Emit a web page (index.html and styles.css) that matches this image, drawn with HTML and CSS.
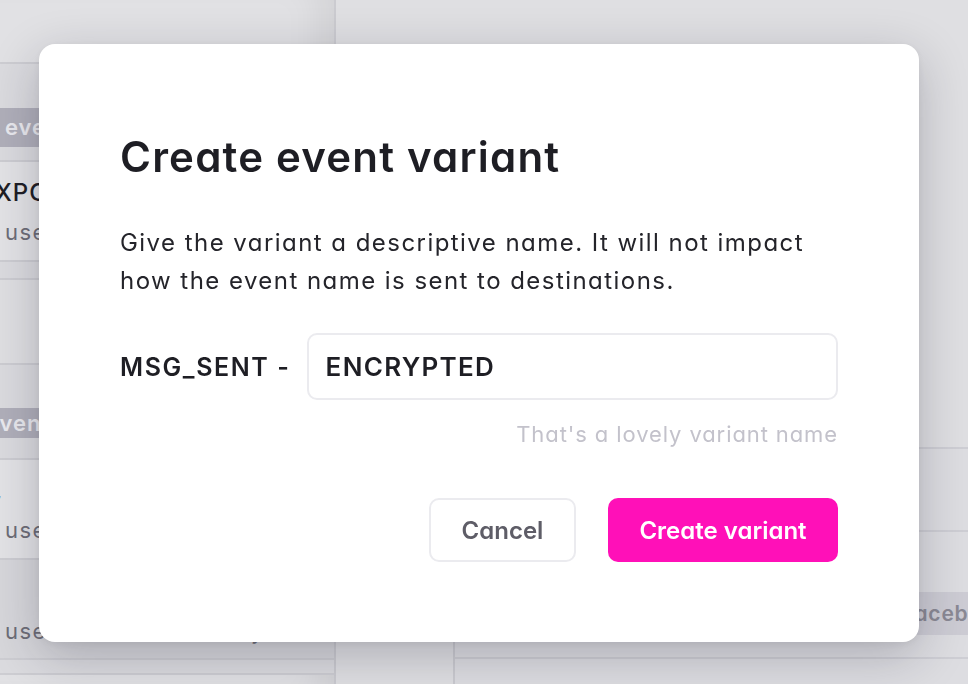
FILE: index.html
```html
<!DOCTYPE html>
<html lang="en">
<head>
<meta charset="utf-8">
<title>Create event variant</title>
<link rel="stylesheet" href="styles.css">
</head>
<body>
<div class="page">
  <aside class="side">
    <div class="side-head"></div>
    <div class="band band-45"></div>
    <div class="tag">events</div>
    <div class="band band-15"></div>
    <div class="item">
      <div class="item-name">XPORT</div>
      <div class="item-sub">user</div>
    </div>
    <div class="band band-18"></div>
    <div class="item item-empty"></div>
    <div class="band band-43"></div>
    <div class="tag tag-2">events</div>
    <div class="band band-22"></div>
    <div class="item">
      <div class="item-name">,</div>
      <div class="item-sub">user</div>
    </div>
    <div class="item item-last">
      <div class="item-sub">user. <span class="item-gap">y</span></div>
    </div>
    <div class="band band-15"></div>
  </aside>
  <main class="main">
    <div class="table">
      <div class="row row-1"></div>
      <div class="row row-2"></div>
      <div class="row row-badge"><span class="badge">facebook</span></div>
      <div class="row row-end"></div>
    </div>
  </main>
</div>

<div class="overlay"></div>

<div class="modal" role="dialog" aria-labelledby="modal-title">
  <h1 class="modal-title" id="modal-title">Create event variant</h1>
  <p class="modal-text">Give the variant a descriptive name. It will not impact how the event name is sent to destinations.</p>
  <div class="field-row">
    <span class="field-prefix">MSG_SENT -</span>
    <input class="field-input" type="text" value="ENCRYPTED">
  </div>
  <div class="field-hint">That's a lovely variant name</div>
  <div class="actions">
    <button class="btn btn-secondary" type="button">Cancel</button>
    <button class="btn btn-primary" type="button">Create variant</button>
  </div>
</div>
</body>
</html>
```

FILE: styles.css
```css
* { box-sizing: border-box; }

html, body {
  margin: 0;
  padding: 0;
  height: 100%;
  overflow: hidden;
}

body {
  font-family: "Inter", "Liberation Sans", sans-serif;
  font-feature-settings: "cv11";
  background: #e4e4e6;
  color: #1e1e24;
}

.page {
  display: flex;
  height: 684px;
}

/* ---------- background: side list ---------- */
.side {
  width: 336px;
  flex: none;
  display: flex;
  flex-direction: column;
  background: #e6e6e8;
  border-right: 2px solid #d0d0d4;
  box-shadow: inset -40px 0 40px -30px rgba(0, 0, 0, 0.08);
  overflow: hidden;
}

.side-head {
  height: 64px;
  flex: none;
  border-bottom: 2px solid #d2d2d6;
}

.band { flex: none; background: #e0e0e3; border-bottom: 2px solid #d2d2d6; }
.band-45 { height: 44px; border-bottom: none; }
.band-15 { height: 15px; }
.band-18 { height: 18px; }
.band-22 { height: 22px; }
.band-43 { height: 43px; border-bottom: none; }

.tag {
  height: 39px;
  flex: none;
  background: #b4b3bd;
  color: #eeeef2;
  font-size: 22px;
  font-weight: 600;
  line-height: 39px;
  padding-left: 5px;
  white-space: nowrap;
  letter-spacing: 1px;
}
.tag-2 { height: 30px; line-height: 30px; text-indent: -19px; }

.item {
  height: 100px;
  flex: none;
  display: flex;
  flex-direction: column;
  justify-content: center;
  gap: 12px;
  border-bottom: 2px solid #d2d2d6;
  background: #e8e8ea;
  white-space: nowrap;
}
.item:first-of-type { padding-top: 8px; }
.item-empty { height: 85px; background: #e4e4e6; }
.item-last { height: 100px; justify-content: flex-end; padding-bottom: 14px; background: #dcdcdf; }

.item-name {
  font-size: 24px;
  font-weight: 500;
  color: #1f1f25;
  text-indent: -5px;
  letter-spacing: 1px;
}
.item-sub {
  font-size: 22px;
  color: #707079;
  padding-left: 5px;
  letter-spacing: 1.5px;
}
.item-gap { margin-left: 180px; }

/* ---------- background: main ---------- */
.main {
  flex: 1;
  display: flex;
  flex-direction: column;
  justify-content: flex-end;
  padding-left: 117px;
  background: #e4e4e6;
}

.table {
  display: flex;
  flex-direction: column;
  border-left: 2px solid #d0d0d4;
}

.row {
  border-top: 2px solid #d3d3d8;
  background: #e2e2e5;
  display: flex;
  align-items: flex-start;
}
.row-1 { height: 83px; }
.row-2 { height: 62px; }
.row-badge { height: 65px; border-top: none; padding-left: 443px; }
.row-end { height: 27px; }

.badge {
  height: 43px;
  flex: 1;
  background: #d2d1d8;
  color: #8d8c96;
  font-weight: 600;
  font-size: 21px;
  line-height: 43px;
  padding-left: 8px;
  overflow: hidden;
  white-space: nowrap;
  letter-spacing: 0.8px;
}

/* ---------- overlay + modal ---------- */
.overlay {
  position: fixed;
  inset: 0;
  background: rgba(20, 20, 30, 0.02);
}

.modal {
  position: absolute;
  left: 39px;
  top: 44px;
  width: 880px;
  height: 598px;
  background: #ffffff;
  border-radius: 16px;
  box-shadow: 0 14px 50px rgba(20, 20, 40, 0.24), 0 2px 8px rgba(20, 20, 40, 0.06);
  padding: 88px 81px 80px 81px;
  display: flex;
  flex-direction: column;
}

.modal-title {
  margin: 0;
  font-size: 42px;
  line-height: 49px;
  font-weight: 600;
  letter-spacing: 1.2px;
  color: #1e1e24;
}

.modal-text {
  margin: 43px 0 0 0;
  font-size: 24px;
  line-height: 38px;
  font-weight: 400;
  color: #24242a;
  letter-spacing: 1.45px;
}

.field-row {
  margin-top: 33px;
  display: flex;
  align-items: center;
  gap: 16px;
}

.field-prefix {
  font-size: 25px;
  font-weight: 600;
  color: #1e1e24;
  white-space: nowrap;
  letter-spacing: 1.6px;
}

.field-input {
  flex: 1;
  min-width: 0;
  height: 67px;
  border: 2px solid #ebebef;
  border-radius: 10px;
  padding: 0 17px;
  font-family: inherit;
  font-feature-settings: "cv11";
  font-size: 26px;
  font-weight: 600;
  letter-spacing: 1.3px;
  color: #1e1e24;
  background: #fff;
  outline: none;
}

.field-hint {
  margin-top: 19px;
  text-align: right;
  font-size: 22px;
  line-height: 30px;
  color: #c3c2cb;
  letter-spacing: 0.9px;
}

.actions {
  margin-top: 49px;
  display: flex;
  justify-content: flex-end;
  gap: 32px;
}

.btn {
  height: 64px;
  border-radius: 10px;
  font-family: inherit;
  font-feature-settings: "cv11";
  font-size: 24px;
  font-weight: 600;
  cursor: pointer;
}

.btn-secondary {
  width: 147px;
  background: #fff;
  border: 2px solid #ebebef;
  color: #5e5d67;
}

.btn-primary {
  width: 230px;
  background: #ff10b8;
  border: none;
  color: #ffffff;
}
```
